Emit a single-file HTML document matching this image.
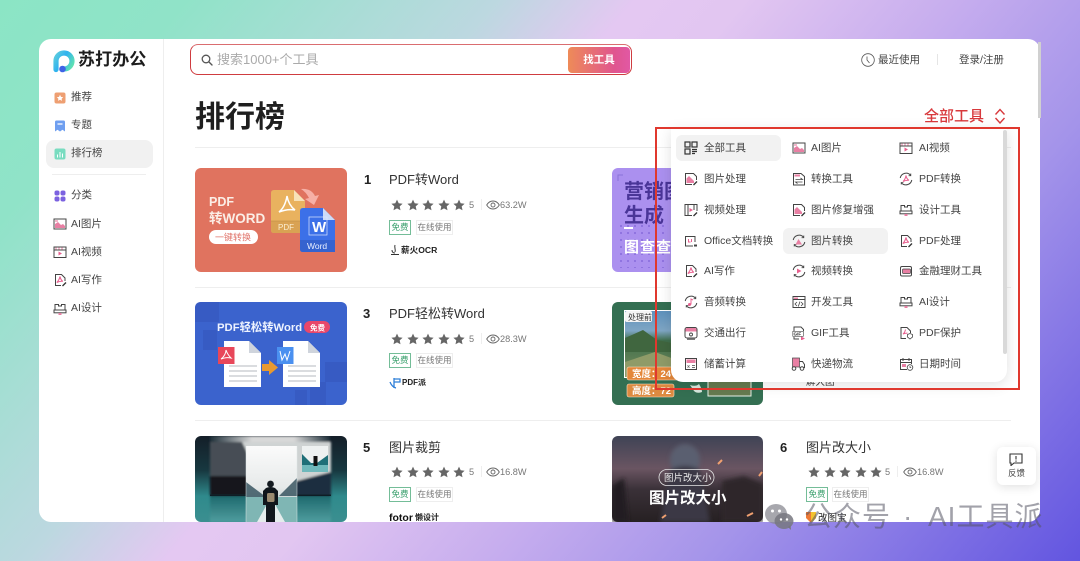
<!DOCTYPE html>
<html lang="zh"><head><meta charset="utf-8"><title>排行榜</title>
<style>
*{box-sizing:border-box;margin:0;padding:0}
html,body{width:1080px;height:561px;overflow:hidden}
body{position:relative;font-family:"Liberation Sans","Noto Sans CJK SC",sans-serif;color:#333;background:linear-gradient(130deg,#8be5c5 0%,#90e3c8 12%,#bcd8e0 32%,#e4c8f2 41%,#e2c6f1 48%,#c6adee 62%,#a494ea 76%,#6255e0 100%)}
.a{position:absolute;white-space:nowrap}
.t{position:absolute;white-space:nowrap;line-height:16px}
svg{position:absolute;display:block;overflow:hidden}
.th{filter:blur(.35px)}
.card{position:absolute;left:39px;top:39px;width:1001px;height:483px;border-radius:12px;background:#fff;overflow:hidden}
.in{position:absolute;left:-39px;top:-39px;width:1080px;height:561px}
.nav{font-size:10.5px;color:#444}
.m{font-size:10.5px;color:#444}
.title{font-size:13px;color:#333}
.no{font-size:13px;font-weight:700;color:#222}
.tag{position:absolute;height:15px;line-height:13px;font-size:8.5px;text-align:center;border:1px solid #eee;color:#777;white-space:nowrap}
.tag.g{border-color:#74bd98;color:#3aa06d}
.gr{font-size:9.2px;color:#777}
.lg{font-weight:700;color:#222}
</style></head><body>
<svg width="0" height="0" style="position:absolute"><defs>
<symbol id="s" viewBox="0 0 12 12"><path d="M6 .6l1.700 3.600 3.900.5-2.900 2.700.8 3.900L6 9.400l-3.500 1.900.8-3.900L.4 4.700l3.900-.5z" fill="#666"/></symbol>
<symbol id="eye" viewBox="0 0 14 10"><path d="M.7 5C2.300 2.300 4.400 1 7 1s4.700 1.300 6.300 4C11.700 7.700 9.600 9 7 9S2.300 7.700.7 5z" fill="none" stroke="#666" stroke-width=".9"/><circle cx="7" cy="5" r="2" fill="none" stroke="#666" stroke-width=".9"/></symbol>
<symbol id="pic" viewBox="0 0 14 14"><rect x="1" y="2" width="12" height="10" fill="none" stroke="#444"/><path d="M2 11V7l3-2 3 3 2-1 2 2v2z" fill="#e87fa3"/><rect x="2" y="3" width="3" height="2" fill="#f2b6ca"/></symbol>
<symbol id="vid" viewBox="0 0 14 14"><rect x="1" y="2" width="12" height="10.500" fill="none" stroke="#444"/><path d="M1 5h12" stroke="#444"/><path d="M3 2.500v2M6 2.500v2M9 2.500v2" stroke="#e87fa3"/><path d="M5.500 6.500l3.500 2-3.500 2z" fill="#e8608f"/></symbol>
<symbol id="edit" viewBox="0 0 14 14"><path d="M8 12.500H1.500v-11h8l3 3V8" fill="none" stroke="#444"/><path d="M2.500 11V6.500L5 4l5 5v2z" fill="#e87fa3"/><path d="M9.500 13l3.500-3.500" stroke="#333" stroke-width="1.300"/></symbol>
<symbol id="pdf" viewBox="0 0 14 14"><path d="M8 12.500H2.500v-11h6l3.500 3.500v3" fill="none" stroke="#444"/><path d="M7 3.500c-.6 2.500-1.600 4.500-3.200 6 2-1 4-1.400 6-1.200C8.300 7.500 7.500 5.800 7 3.500z" fill="none" stroke="#e8608f" stroke-width="1.100"/><path d="M9.500 13l3.500-3.500" stroke="#333" stroke-width="1.300"/></symbol>
<symbol id="cy" viewBox="0 0 14 14"><path d="M12.800 8a6 6 0 0 1-10.400 2.800M1.200 6A6 6 0 0 1 11.600 3.200" fill="none" stroke="#444"/><path d="M11.800 1.500v2.200H9.600M2.200 12.500v-2h2.200" fill="none" stroke="#444" stroke-width=".8"/></symbol>
<symbol id="des" viewBox="0 0 14 14"><path d="M2 8V2.500h3.500v1.500h3V2.500H12V8" fill="none" stroke="#444"/><rect x="1" y="8" width="12" height="2.800" fill="none" stroke="#444"/><rect x="5.500" y="11" width="3" height="2" fill="#e87fa3"/></symbol>
</defs></svg>

<div class="card"><div class="in">
<!-- sidebar -->
<div class="a" style="left:163px;top:39px;width:1px;height:483px;background:#eee"></div>
<svg style="left:53px;top:50px" width="22" height="23" viewBox="0 0 22 23"><defs><linearGradient id="lg" x1="0" y1=".2" x2="1" y2=".8"><stop offset="0" stop-color="#55c8e0"/><stop offset=".4" stop-color="#2fb2f0"/><stop offset="1" stop-color="#5ee0b4"/></linearGradient></defs><path d="M3 19.500V11a8 8 0 1 1 8 8" fill="none" stroke="url(#lg)" stroke-width="5.200" stroke-linecap="round"/><circle cx="9.500" cy="19" r="3.300" fill="#3f63e6"/></svg>
<div class="t" style="left:78px;top:50px;line-height:20px;font-size:17px;font-weight:700;color:#1c1c1c;letter-spacing:.1px">苏打办公</div>

<svg style="left:54px;top:92px" width="12" height="12" viewBox="0 0 12 12"><rect width="11" height="11" x=".5" y=".5" rx="2" fill="#ee9f72"/><path d="M6 2.800l1 2.100 2.200.3-1.600 1.500.4 2.200-2-1.100-2 1.100.4-2.200-1.600-1.500 2.200-.3z" fill="#fff"/></svg>
<svg style="left:54px;top:120px" width="12" height="12" viewBox="0 0 12 12"><path d="M1 2q0-1.500 1.500-1.500h7Q11 .5 11 2v9.500L8.500 9.700 6 11.500 3.500 9.700 1 11.500z" fill="#6f9ff0"/><path d="M3.500 4h5" stroke="#fff" stroke-width="1.200"/></svg>
<div class="a" style="left:46px;top:140px;width:107px;height:28px;border-radius:8px;background:#f1f1f1"></div>
<svg style="left:54px;top:148px" width="12" height="12" viewBox="0 0 12 12"><rect x=".5" y=".5" width="11" height="11" rx="2" fill="#79dcc0"/><path d="M3.500 6.500v3M6 4v5.500M8.500 5.500v4" stroke="#fff" stroke-width="1"/></svg>
<div class="t nav" style="left:71px;top:89px">推荐</div>
<div class="t nav" style="left:71px;top:117px">专题</div>
<div class="t nav" style="left:71px;top:145px">排行榜</div>
<div class="a" style="left:52px;top:174px;width:94px;height:1px;background:#eee"></div>
<svg style="left:54px;top:190px" width="12" height="12" viewBox="0 0 12 12" fill="#7b62e0"><rect x=".5" y=".5" width="5" height="5" rx="2"/><rect x="6.500" y=".5" width="5" height="5" rx="2"/><rect x=".5" y="6.500" width="5" height="5" rx="2"/><rect x="6.500" y="6.500" width="5" height="5" rx="2"/></svg>
<div class="t nav" style="left:71px;top:187px">分类</div>
<svg style="left:53px;top:217px" width="14" height="14"><use href="#pic"/></svg>
<div class="t nav" style="left:71px;top:216px">AI图片</div>
<svg style="left:53px;top:245px" width="14" height="14"><use href="#vid"/></svg>
<div class="t nav" style="left:71px;top:244px">AI视频</div>
<svg style="left:53px;top:273px" width="14" height="14"><use href="#pdf"/></svg>
<div class="t nav" style="left:71px;top:272px">AI写作</div>
<svg style="left:53px;top:302px" width="14" height="14"><use href="#des"/></svg>
<div class="t nav" style="left:71px;top:300px">AI设计</div>

<!-- header -->
<div class="a" style="left:190px;top:44px;width:442px;height:31px;border:1.500px solid #cf3c40;border-top-color:#da6d70;border-radius:8px;background:#fff"></div>
<svg style="left:201px;top:54px" width="12" height="12" viewBox="0 0 12 12"><circle cx="5" cy="5" r="3.800" fill="none" stroke="#555" stroke-width="1.300"/><path d="M8 8l3 3" stroke="#555" stroke-width="1.400" stroke-linecap="round"/></svg>
<div class="t" style="left:217px;top:52px;font-size:13px;color:#aaa">搜索1000+个工具</div>
<div class="a" style="left:568px;top:47px;width:62px;height:26px;border-radius:4px;background:linear-gradient(90deg,#ee8b58,#e0558f 75%,#e158a4);color:#fff;font-size:10.500px;font-weight:700;text-align:center;line-height:26px">找工具</div>
<svg style="left:861px;top:53px" width="14" height="14" viewBox="0 0 14 14"><circle cx="7" cy="7" r="6.300" fill="none" stroke="#555" stroke-width=".8"/><path d="M6 3.500V7l2.500 3" fill="none" stroke="#555" stroke-width=".8"/></svg>
<div class="t m" style="left:878px;top:52px">最近使用</div>
<div class="a" style="left:937px;top:54px;width:1px;height:11px;background:#e5e5e5"></div>
<div class="t m" style="left:959px;top:52px">登录/注册</div>

<div class="a" style="left:195px;top:98px;font-size:30px;font-weight:700;line-height:40px;color:#1f1f1f">排行榜</div>
<div class="a" style="left:195px;top:147px;width:816px;height:1px;background:#eee"></div>
<div class="a" style="left:195px;top:287px;width:816px;height:1px;background:#eee"></div>
<div class="a" style="left:195px;top:420px;width:816px;height:1px;background:#eee"></div>
<div class="a" style="left:924px;top:107px;font-size:15px;line-height:20px;font-weight:500;color:#d8393c">全部工具</div>
<svg style="left:994px;top:108px" width="12" height="16" viewBox="0 0 12 16"><path d="M1.500 6.500L6 1.500l4.500 5M1.500 10L6 15l4.500-5" fill="none" stroke="#d8393c" stroke-width="1.400"/></svg>

<!-- thumb 1 -->
<svg class="th" style="left:195px;top:168px" width="152" height="104" viewBox="0 0 152 104"><rect width="152" height="104" rx="6" fill="#e0735f"/>
<text x="14" y="38" font-size="12.500" font-weight="700" fill="#fbeee6">PDF</text>
<text x="14" y="55" font-size="13.500" font-weight="700" fill="#fbeee6">转WORD</text>
<rect x="14" y="62" width="49" height="14" rx="7" fill="#fff"/><text x="20" y="72.500" font-size="9" fill="#e0736a">一键转换</text>
<path d="M76 25q0-3 3-3h20l11 11v32H79q-3 0-3-3z" fill="#e9b25f"/><path d="M99 22l11 11H99z" fill="#f7e2b8"/><path d="M76 53h34v12H79q-3 0-3-3z" fill="#d9a253"/><path d="M76 53h34" stroke="#b98a45" stroke-width=".5"/>
<text x="83" y="62" font-size="8" fill="#fbeed2">PDF</text>
<path d="M92 28c-1 6-3 12-8 16 5-2 11-3 16-2-4-3-7-8-8-14z" fill="none" stroke="#fff" stroke-width="1.500"/>
<path d="M106 21q10-1 14 7l4-1-5 10-9-6 4-1q-3-6-8-9z" fill="#f6b0a6"/>
<path d="M105 43q0-3 3-3h20l12 12v32h-32q-3 0-3-3z" fill="#3c70e8"/><path d="M128 40l12 12h-12z" fill="#cddcf8"/><path d="M105 72h35v12h-32q-3 0-3-3z" fill="#3563cf"/>
<rect x="114" y="49" width="18" height="18" fill="none" stroke="#dbe6ff" stroke-width=".7"/><text x="117" y="64" font-size="15" font-weight="700" fill="#fff">W</text>
<text x="112" y="81" font-size="8.500" fill="#eaf0ff">Word</text></svg>
<!-- row 1 -->
<div class="t no" style="left:364px;top:172px">1</div>
<div class="t title" style="left:389px;top:172px">PDF转Word</div>
<svg style="left:391px;top:199px" width="12" height="12"><use href="#s"/></svg><svg style="left:406.500px;top:199px" width="12" height="12"><use href="#s"/></svg><svg style="left:422px;top:199px" width="12" height="12"><use href="#s"/></svg><svg style="left:437.500px;top:199px" width="12" height="12"><use href="#s"/></svg><svg style="left:453px;top:199px" width="12" height="12"><use href="#s"/></svg>
<div class="t gr" style="left:469px;top:197px">5</div><div class="a" style="left:481px;top:199px;width:1px;height:11px;background:#eee"></div>
<svg style="left:486px;top:200px" width="14" height="10"><use href="#eye"/></svg><div class="t gr" style="left:500px;top:197px">63.2W</div>
<div class="tag g" style="left:389px;top:220px;width:22px">免费</div><div class="tag" style="left:416px;top:220px;width:37px">在线使用</div>
<svg style="left:390px;top:244px" width="10" height="12" viewBox="0 0 10 12"><path d="M5 1c-1 3 1 4 0 7M2 6c0 2 1 3 3 3M1 10.500h8" fill="none" stroke="#333"/></svg>
<div class="t lg" style="left:401px;top:242px;font-size:8.600px">薪火OCR</div>

<!-- thumb 2 -->
<svg class="th" style="left:195px;top:302px" width="152" height="103" viewBox="0 0 152 103"><rect width="152" height="103" rx="6" fill="#3b63cd"/>
<path d="M0 6q0-6 6-6h18v20H0zM8 28h14v20H8zM130 60h22v20h-22zM115 80h16v23h-16zM100 88h12v15h-12z" fill="#3659bf" opacity=".7"/>
<text x="22" y="29" font-size="11.300" font-weight="700" fill="#eef3ff">PDF轻松转Word</text>
<rect x="109" y="19" width="26" height="12" rx="6" fill="#e8476a"/><text x="115" y="28.500" font-size="7.500" font-weight="700" fill="#fff">免费</text>
<path d="M29 39h25l12 12v34H29z" fill="#fff"/><path d="M54 39l12 12H54z" fill="#cfd4dc"/><path d="M88 39h25l12 12v34H88z" fill="#fff"/><path d="M113 39l12 12h-12z" fill="#cfd4dc"/>
<path d="M34 64h28M34 69h28M34 74h28M34 79h28M93 64h28M93 69h28M93 74h28M93 79h28" stroke="#b5b8bf" stroke-width="1"/>
<rect x="23" y="45" width="16.500" height="17" fill="#e8475a"/><path d="M31 48c0 3-2 7-5 9 3-1 6-2 10-1-2-2-4-5-5-8z" fill="none" stroke="#fff" stroke-width="1"/>
<rect x="82" y="45" width="16.500" height="17" fill="#4a90f0"/><path d="M85 49l2 9 3-6 2 6 3-9" fill="none" stroke="#fff" stroke-width="1"/>
<path d="M67 62h7v-4l9 7.500-9 7.500v-4h-7z" fill="#e8992f"/></svg>
<!-- row 3 -->
<div class="t no" style="left:363px;top:306px">3</div>
<div class="t title" style="left:389px;top:306px">PDF轻松转Word</div>
<svg style="left:391px;top:333px" width="12" height="12"><use href="#s"/></svg><svg style="left:406.500px;top:333px" width="12" height="12"><use href="#s"/></svg><svg style="left:422px;top:333px" width="12" height="12"><use href="#s"/></svg><svg style="left:437.500px;top:333px" width="12" height="12"><use href="#s"/></svg><svg style="left:453px;top:333px" width="12" height="12"><use href="#s"/></svg>
<div class="t gr" style="left:469px;top:331px">5</div><div class="a" style="left:481px;top:333px;width:1px;height:11px;background:#eee"></div>
<svg style="left:486px;top:334px" width="14" height="10"><use href="#eye"/></svg><div class="t gr" style="left:500px;top:331px">28.3W</div>
<div class="tag g" style="left:389px;top:353px;width:22px">免费</div><div class="tag" style="left:416px;top:353px;width:37px">在线使用</div>
<svg style="left:389px;top:377px" width="13" height="12" viewBox="0 0 13 12"><path d="M1 5q2 5 6 6M5 1v10M5 2h6v3H5" fill="none" stroke="#2f7fd8" stroke-width="1.300"/></svg>
<div class="t lg" style="left:402px;top:375px;font-size:8px">PDF派</div>

<!-- thumb 5 -->
<svg style="left:195px;top:436px" width="152" height="86" viewBox="0 0 152 86"><defs>
<linearGradient id="top" x1="0" y1="0" x2="1" y2="0"><stop offset="0" stop-color="#1d2e38"/><stop offset=".35" stop-color="#d8d8d8"/><stop offset=".7" stop-color="#d8d8d8"/><stop offset="1" stop-color="#1d2e38"/></linearGradient>
<linearGradient id="wat" x1="0" y1="0" x2="0" y2="1"><stop offset="0" stop-color="#1e6a6e"/><stop offset="1" stop-color="#4f9d9e"/></linearGradient>
<linearGradient id="edge" x1="0" y1="0" x2="0" y2="1"><stop offset="0" stop-color="#141e28"/><stop offset=".4" stop-color="#173840"/><stop offset=".7" stop-color="#2f8a8c"/><stop offset="1" stop-color="#3b8f90"/></linearGradient>
<linearGradient id="sk" x1="0" y1="0" x2="0" y2="1"><stop offset="0" stop-color="#fbfbfb"/><stop offset=".55" stop-color="#e6e9e9"/><stop offset="1" stop-color="#8fb0b0"/></linearGradient>
<filter id="b1"><feGaussianBlur stdDeviation="1"/></filter></defs>
<rect width="152" height="86" rx="6" fill="url(#edge)"/>
<g filter="url(#b1)"><rect x="15" width="120" height="9" fill="url(#top)"/>
<rect x="15" y="6" width="121" height="80" fill="#cfd3d3"/>
<path d="M15 6h32l26 54H15z" fill="#474d55"/><path d="M15 40h40l12 20H15z" fill="#14181d"/>
<path d="M136 36l-38 10-22 14h60z" fill="#1d2f40"/>
<rect x="15" y="60" width="121" height="26" fill="url(#wat)"/></g>
<rect x="15" y="58.500" width="121" height="1.500" fill="#0f1d25"/>
<rect x="51" y="10" width="51" height="76" fill="url(#sk)"/><path d="M51 46l20 15H51zM102 42L84 60h18z" fill="#3a5661" opacity=".85"/><path d="M51 61h51v25H51z" fill="#7fb6b4"/><path d="M62 86l14-25 14 25z" fill="#e4ecec"/>
<path d="M51 10v76M102 10v76" stroke="#dfe6e6" stroke-width=".5"/>
<circle cx="75.500" cy="48" r="3.400" fill="#141a20"/><path d="M71 52q4.500-2 9 0l3 3v14h-3v17H71V69h-3V55z" fill="#10161c"/><rect x="72" y="57" width="7.500" height="9" rx="1.500" fill="#9a8a70"/>
<rect x="107" y="10" width="26" height="26" fill="#eef1f1"/><path d="M107 18l9 9h6l11-8v17h-26z" fill="#1f6f78"/><path d="M107 29h26v7h-26z" fill="#6fb8bb"/><rect x="118.500" y="20" width="4" height="10" fill="#111"/></svg>
<!-- row 5 -->
<div class="t no" style="left:363px;top:440px">5</div>
<div class="t title" style="left:389px;top:440px">图片裁剪</div>
<svg style="left:391px;top:466px" width="12" height="12"><use href="#s"/></svg><svg style="left:406.500px;top:466px" width="12" height="12"><use href="#s"/></svg><svg style="left:422px;top:466px" width="12" height="12"><use href="#s"/></svg><svg style="left:437.500px;top:466px" width="12" height="12"><use href="#s"/></svg><svg style="left:453px;top:466px" width="12" height="12"><use href="#s"/></svg>
<div class="t gr" style="left:469px;top:464px">5</div><div class="a" style="left:481px;top:466px;width:1px;height:11px;background:#eee"></div>
<svg style="left:486px;top:467px" width="14" height="10"><use href="#eye"/></svg><div class="t gr" style="left:500px;top:464px">16.8W</div>
<div class="tag g" style="left:389px;top:487px;width:22px">免费</div><div class="tag" style="left:416px;top:487px;width:37px">在线使用</div>
<div class="t" style="left:389px;top:510px;font-size:10.500px;font-weight:700;color:#111">fotor</div><div class="t" style="left:415px;top:510px;font-size:8px;font-weight:700;color:#222">懒设计</div>

<!-- purple thumb -->
<svg class="th" style="left:612px;top:168px" width="151" height="104" viewBox="0 0 151 104"><defs><pattern id="dt" width="7" height="7" patternUnits="userSpaceOnUse"><circle cx="2" cy="2" r=".9" fill="#7c5fd6"/></pattern></defs><rect width="151" height="104" rx="6" fill="#ab90ef"/><rect x="3" y="55" width="50" height="45" fill="url(#dt)"/>
<path d="M6 13V7h5" fill="none" stroke="#8a72d8" stroke-width="1"/>
<text x="12" y="30" font-size="20" font-weight="700" fill="#4a3598">营销图</text><text x="12" y="54" font-size="20" font-weight="700" fill="#4a3598">生成</text>
<rect x="12" y="59" width="9" height="2" fill="#fff"/><text x="12" y="84" font-size="15" font-weight="700" fill="#fff" letter-spacing="1">图查查</text></svg>

<!-- green thumb -->
<svg class="th" style="left:612px;top:302px" width="151" height="103" viewBox="0 0 151 103"><defs><linearGradient id="mt" x1="0" y1="0" x2="0" y2="1"><stop offset="0" stop-color="#5f92bd"/><stop offset=".3" stop-color="#7fa6c4"/><stop offset=".45" stop-color="#3f6e4c"/><stop offset="1" stop-color="#7a8f5d"/></linearGradient></defs><rect width="151" height="103" rx="6" fill="#346f52"/>
<rect x="12" y="8" width="70" height="68" fill="#fff"/><rect x="13" y="9" width="68" height="66" fill="url(#mt)"/><path d="M13 36l18-8 14 10 20 4 16-6v14H13z" fill="#40663f"/><path d="M13 60l30-10 38 14v11H13z" fill="#8f9b68"/>
<rect x="13" y="9" width="27" height="11" rx="2" fill="#f4f4f4"/><text x="16" y="18" font-size="8" fill="#333">处理前</text>
<rect x="15" y="65" width="60" height="13" rx="2" fill="#e4873a" stroke="#fbe3c9" stroke-width=".6"/><text x="20" y="75" font-size="9.500" font-weight="700" fill="#fff">宽度：24</text>
<rect x="15" y="82" width="47" height="13" rx="2" fill="#dd8a40" stroke="#fbe3c9" stroke-width=".6"/><text x="20" y="92" font-size="9.500" font-weight="700" fill="#fff">高度：72</text>
<path d="M78 83q6 2 9-1 3 5 3 8-5 2-8-1z" fill="#d9e8de"/><rect x="96" y="78" width="43" height="16" fill="#667b4f" stroke="#e8efe6" stroke-width="1"/></svg>
<div class="t" style="left:806px;top:375px;font-size:9.500px;color:#333">解大图</div>

<!-- dark thumb -->
<svg style="left:612px;top:436px" width="151" height="86" viewBox="0 0 151 86"><defs><linearGradient id="dk" x1="0" y1="0" x2="0" y2="1"><stop offset="0" stop-color="#3f4355"/><stop offset=".38" stop-color="#6a5562"/><stop offset=".62" stop-color="#3a3138"/><stop offset="1" stop-color="#262022"/></linearGradient><filter id="b2"><feGaussianBlur stdDeviation="2"/></filter></defs><rect width="151" height="86" rx="6" fill="url(#dk)"/>
<g filter="url(#b2)"><ellipse cx="73" cy="24" rx="15" ry="16" fill="#5a5f70"/><path d="M58 34q15-8 30 0l10 52H48z" fill="#3a3944"/><path d="M110 45l22-5 19 8v38h-41z" fill="#2e272c"/><path d="M0 50l12-8 4 44H0z" fill="#241e22"/></g>
<path d="M106 28l4-4M150 36l-3 4M135 80l6-3M50 82l4-3" stroke="#f0a070" stroke-width="2"/>
<rect x="47" y="33.500" width="55" height="16" rx="8" fill="none" stroke="#e8e8e8" stroke-width=".8"/><text x="52" y="45" font-size="9.500" fill="#e9e9e9">图片改大小</text>
<text x="37" y="67" font-size="15.500" font-weight="700" fill="#fff">图片改大小</text></svg>
<!-- row 6 -->
<div class="t no" style="left:780px;top:440px">6</div>
<div class="t title" style="left:806px;top:440px">图片改大小</div>
<svg style="left:808px;top:466px" width="12" height="12"><use href="#s"/></svg><svg style="left:823.500px;top:466px" width="12" height="12"><use href="#s"/></svg><svg style="left:839px;top:466px" width="12" height="12"><use href="#s"/></svg><svg style="left:854.500px;top:466px" width="12" height="12"><use href="#s"/></svg><svg style="left:870px;top:466px" width="12" height="12"><use href="#s"/></svg>
<div class="t gr" style="left:885px;top:464px">5</div><div class="a" style="left:897px;top:466px;width:1px;height:11px;background:#eee"></div>
<svg style="left:903px;top:467px" width="14" height="10"><use href="#eye"/></svg><div class="t gr" style="left:917px;top:464px">16.8W</div>
<div class="tag g" style="left:806px;top:487px;width:22px">免费</div><div class="tag" style="left:832px;top:487px;width:37px">在线使用</div>
<svg style="left:806px;top:512px" width="10" height="11" viewBox="0 0 10 11"><path d="M0 0h10v6l-5 5-5-5z" fill="#ee7a35"/><path d="M5 0h5v6l-5 5z" fill="#f2c230"/></svg>
<div class="t" style="left:818px;top:511px;font-size:9.500px;color:#222">改图宝</div>

<!-- dropdown -->
<div class="a" style="left:671px;top:128px;width:336px;height:254px;background:#fff;border-radius:0 0 12px 12px;box-shadow:0 3px 14px rgba(0,0,0,.12)"></div>
<div class="a" style="left:1003px;top:130px;width:4px;height:224px;background:#d9d9d9;border-radius:2px"></div>
<div class="a" style="left:676px;top:135px;width:105px;height:26px;border-radius:6px;background:#f2f2f2"></div>
<div class="a" style="left:783px;top:228px;width:105px;height:26px;border-radius:6px;background:#f2f2f2"></div>

<svg style="left:684px;top:141px" width="14" height="14" viewBox="0 0 14 14" fill="none" stroke="#333" stroke-width="1.200"><rect x="1" y="1" width="5" height="5"/><rect x="8" y="1" width="5" height="5"/><rect x="1" y="8" width="5" height="5"/><path d="M8 8.500h5M8 10.500h5M8 12.500h3"/></svg>
<div class="t m" style="left:704px;top:140px">全部工具</div>
<svg style="left:792px;top:141px" width="14" height="14"><use href="#pic"/></svg><div class="t m" style="left:811px;top:140px">AI图片</div>
<svg style="left:899px;top:141px" width="14" height="14"><use href="#vid"/></svg><div class="t m" style="left:919px;top:140px">AI视频</div>

<svg style="left:684px;top:172px" width="14" height="14"><use href="#edit"/></svg><div class="t m" style="left:704px;top:171px">图片处理</div>
<svg style="left:792px;top:172px" width="14" height="14" viewBox="0 0 14 14"><path d="M1.500 13V1.500H9l3.500 3V13z" fill="none" stroke="#444"/><path d="M2.500 2.500H8v2H2.500z" fill="#e87fa3"/><path d="M3.500 7.500h7l-2-1.500M10.500 10h-7l2 1.500" fill="none" stroke="#444" stroke-width=".8"/></svg><div class="t m" style="left:811px;top:171px">转换工具</div>
<svg style="left:899px;top:172px" width="14" height="14" viewBox="0 0 14 14"><use href="#cy"/><path d="M7 3.500C6.600 6 5.700 8 4 9.500c2-1 4-1.400 6-1.200C8.300 7.500 7.400 5.800 7 3.500z" fill="none" stroke="#e8608f"/></svg><div class="t m" style="left:919px;top:171px">PDF转换</div>

<svg style="left:684px;top:203px" width="14" height="14" viewBox="0 0 14 14"><path d="M8 12.500H1v-11h12V8" fill="none" stroke="#444"/><path d="M4 1.500v11M10 1.500V7" stroke="#444"/><path d="M5.500 5l3.500 2-3.500 2z" fill="#e8608f"/><path d="M9.500 13l3.500-3.500" stroke="#333" stroke-width="1.300"/></svg><div class="t m" style="left:704px;top:202px">视频处理</div>
<svg style="left:792px;top:203px" width="14" height="14"><use href="#edit"/></svg><div class="t m" style="left:811px;top:202px">图片修复增强</div>
<svg style="left:899px;top:203px" width="14" height="14"><use href="#des"/></svg><div class="t m" style="left:919px;top:202px">设计工具</div>

<svg style="left:684px;top:234px" width="14" height="14" viewBox="0 0 14 14"><path d="M9 12H1.500V2.500H11V8" fill="none" stroke="#444"/><path d="M4.500 5v3h2M7.500 5v3" stroke="#e8608f" fill="none"/><path d="M10 10.500h3v2h-3z" fill="#444"/></svg><div class="t m" style="left:704px;top:233px">Office文档转换</div>
<svg style="left:792px;top:234px" width="14" height="14" viewBox="0 0 14 14"><use href="#cy"/><path d="M3.500 10.500l3-5.500 3.500 5.500z" fill="#e87fa3"/></svg><div class="t m" style="left:811px;top:233px">图片转换</div>
<svg style="left:899px;top:234px" width="14" height="14"><use href="#pdf"/></svg><div class="t m" style="left:919px;top:233px">PDF处理</div>

<svg style="left:684px;top:264px" width="14" height="14"><use href="#pdf"/></svg><div class="t m" style="left:704px;top:263px">AI写作</div>
<svg style="left:792px;top:264px" width="14" height="14" viewBox="0 0 14 14"><use href="#cy"/><path d="M5 4.500l4.500 2.500L5 9.500z" fill="#e8608f"/></svg><div class="t m" style="left:811px;top:263px">视频转换</div>
<svg style="left:899px;top:264px" width="14" height="14" viewBox="0 0 14 14"><rect x="1.500" y="2.500" width="11" height="9.500" rx="1.500" fill="none" stroke="#444"/><rect x="3.500" y="5" width="8" height="4.500" rx="1" fill="#e87fa3" stroke="#444" stroke-width=".7"/></svg><div class="t m" style="left:919px;top:263px">金融理财工具</div>

<svg style="left:684px;top:295px" width="14" height="14" viewBox="0 0 14 14"><use href="#cy"/><circle cx="5.500" cy="9.500" r="1.500" fill="#e8608f"/><path d="M7 9.500V4l2 1" fill="none" stroke="#e8608f"/></svg><div class="t m" style="left:704px;top:294px">音频转换</div>
<svg style="left:792px;top:295px" width="14" height="14" viewBox="0 0 14 14"><rect x="1" y="1.500" width="12" height="11" fill="none" stroke="#444"/><path d="M1 4.500h12" stroke="#444"/><rect x="2" y="2.500" width="4" height="1.500" fill="#e87fa3"/><path d="M5 7l-2 2 2 2M9 7l2 2-2 2M8 6.500L6.300 11.500" fill="none" stroke="#444" stroke-width=".8"/></svg><div class="t m" style="left:811px;top:294px">开发工具</div>
<svg style="left:899px;top:295px" width="14" height="14"><use href="#des"/></svg><div class="t m" style="left:919px;top:294px">AI设计</div>

<svg style="left:684px;top:326px" width="14" height="14" viewBox="0 0 14 14"><rect x="1" y="1.500" width="12" height="10.500" rx="2" fill="none" stroke="#444"/><path d="M1.500 5.500V3.500q0-1.500 1.500-1.500h8q1.500 0 1.500 1.500v2z" fill="#e87fa3"/><circle cx="7" cy="8.500" r="1.500" fill="none" stroke="#444" stroke-width=".9"/><path d="M3 13.200h8" stroke="#444"/></svg><div class="t m" style="left:704px;top:325px">交通出行</div>
<svg style="left:792px;top:326px" width="14" height="14" viewBox="0 0 14 14"><path d="M2 5V1h7l2.500 2.500V5M2 11v2h5" fill="none" stroke="#444"/><rect x=".8" y="5.300" width="10.500" height="5" fill="none" stroke="#444" stroke-width=".6"/><text x="1.500" y="9.500" font-size="4.600" font-weight="700" fill="#333">GIF</text><path d="M9 10.500l4 2-4 2z" fill="#e8608f"/></svg><div class="t m" style="left:811px;top:325px">GIF工具</div>
<svg style="left:899px;top:326px" width="14" height="14" viewBox="0 0 14 14"><path d="M7 12.500H2v-11h6l3.500 3.500v2" fill="none" stroke="#444"/><path d="M6.500 3.500c-.4 2-1 3.500-2.500 4.500 1.500-.6 3-.9 4.500-.8" fill="none" stroke="#e8608f"/><path d="M8.500 8.500l2.500-1 2.500 1v2.500l-2.500 2-2.500-2z" fill="#fff" stroke="#444" stroke-width=".8"/></svg><div class="t m" style="left:919px;top:325px">PDF保护</div>

<svg style="left:684px;top:357px" width="14" height="14" viewBox="0 0 14 14"><rect x="1.500" y="1.500" width="11" height="11" fill="none" stroke="#444"/><rect x="2.500" y="2.500" width="9" height="3.500" fill="#e87fa3"/><path d="M3.500 8.500l2 2M5.500 8.500l-2 2M8 8.500h3M8 10.500h3" stroke="#444" stroke-width=".8"/></svg><div class="t m" style="left:704px;top:356px">储蓄计算</div>
<svg style="left:791px;top:357px" width="15" height="14" viewBox="0 0 15 14"><rect x="1.500" y="1" width="7" height="9" fill="#e87fa3" stroke="#444" stroke-width=".7"/><path d="M8.500 4.500h3l2 3v3h-5" fill="none" stroke="#444"/><circle cx="3" cy="11.500" r="1.800" fill="#fff" stroke="#444"/><circle cx="11" cy="11.500" r="1.800" fill="#fff" stroke="#444"/></svg><div class="t m" style="left:811px;top:356px">快递物流</div>
<svg style="left:899px;top:357px" width="15" height="14" viewBox="0 0 15 14"><path d="M8 12.500H1.500v-10h11V7" fill="none" stroke="#444"/><path d="M4 1v3M10 1v3M1.500 5.500h11" stroke="#444"/><rect x="3" y="7" width="4" height="3" fill="#e87fa3"/><circle cx="11" cy="10.500" r="2.800" fill="#fff" stroke="#444" stroke-width=".8"/><path d="M11 9v1.500h1.200" fill="none" stroke="#444" stroke-width=".7"/></svg><div class="t m" style="left:919px;top:356px">日期时间</div>

<!-- feedback -->
<div class="a" style="left:997px;top:447px;width:39px;height:38px;background:#fff;border-radius:6px;box-shadow:0 2px 10px rgba(0,0,0,.12)"></div>
<svg style="left:1009px;top:453px" width="14" height="13" viewBox="0 0 14 13"><path d="M1 1h12v9H5l-3 2.500V10H1z" fill="none" stroke="#333" stroke-width="1.100"/><path d="M7 3v3.500M7 7.500v1.200" stroke="#333" stroke-width="1.100"/></svg>
<div class="a" style="left:997px;top:466px;width:39px;text-align:center;font-size:8.500px;line-height:14px;color:#444">反馈</div>
</div></div>

<!-- page scrollbar -->
<div class="a" style="left:1038px;top:42px;width:3px;height:76px;background:#d0d0d0"></div>

<!-- annotation -->
<div class="a" style="left:655px;top:127px;width:365px;height:263px;border:2px solid #e0382e"></div>

<!-- watermark -->
<svg style="left:765px;top:503px" width="29" height="28" viewBox="0 0 29 28"><ellipse cx="11" cy="11" rx="11" ry="10" fill="#8a8a92" opacity=".75"/><ellipse cx="19" cy="18" rx="9.500" ry="8" fill="#77777f" opacity=".85"/><path d="M23 24l3 3-.5-5z" fill="#77777f"/><circle cx="7.500" cy="8" r="1.500" fill="#fff"/><circle cx="14.500" cy="8" r="1.500" fill="#fff"/><circle cx="16" cy="16.500" r="1.200" fill="#fff"/><circle cx="22" cy="16.500" r="1.200" fill="#fff"/></svg>
<div class="a" style="left:804px;top:498px;font-size:28px;line-height:38px;color:rgba(85,85,100,.55);letter-spacing:1px">公众号</div>
<div class="a" style="left:903px;top:498px;font-size:28px;line-height:38px;color:rgba(85,85,100,.55)">·</div>
<div class="a" style="left:928px;top:498px;font-size:28px;line-height:38px;color:rgba(85,85,100,.55);letter-spacing:1px">AI工具派</div>
</body></html>
